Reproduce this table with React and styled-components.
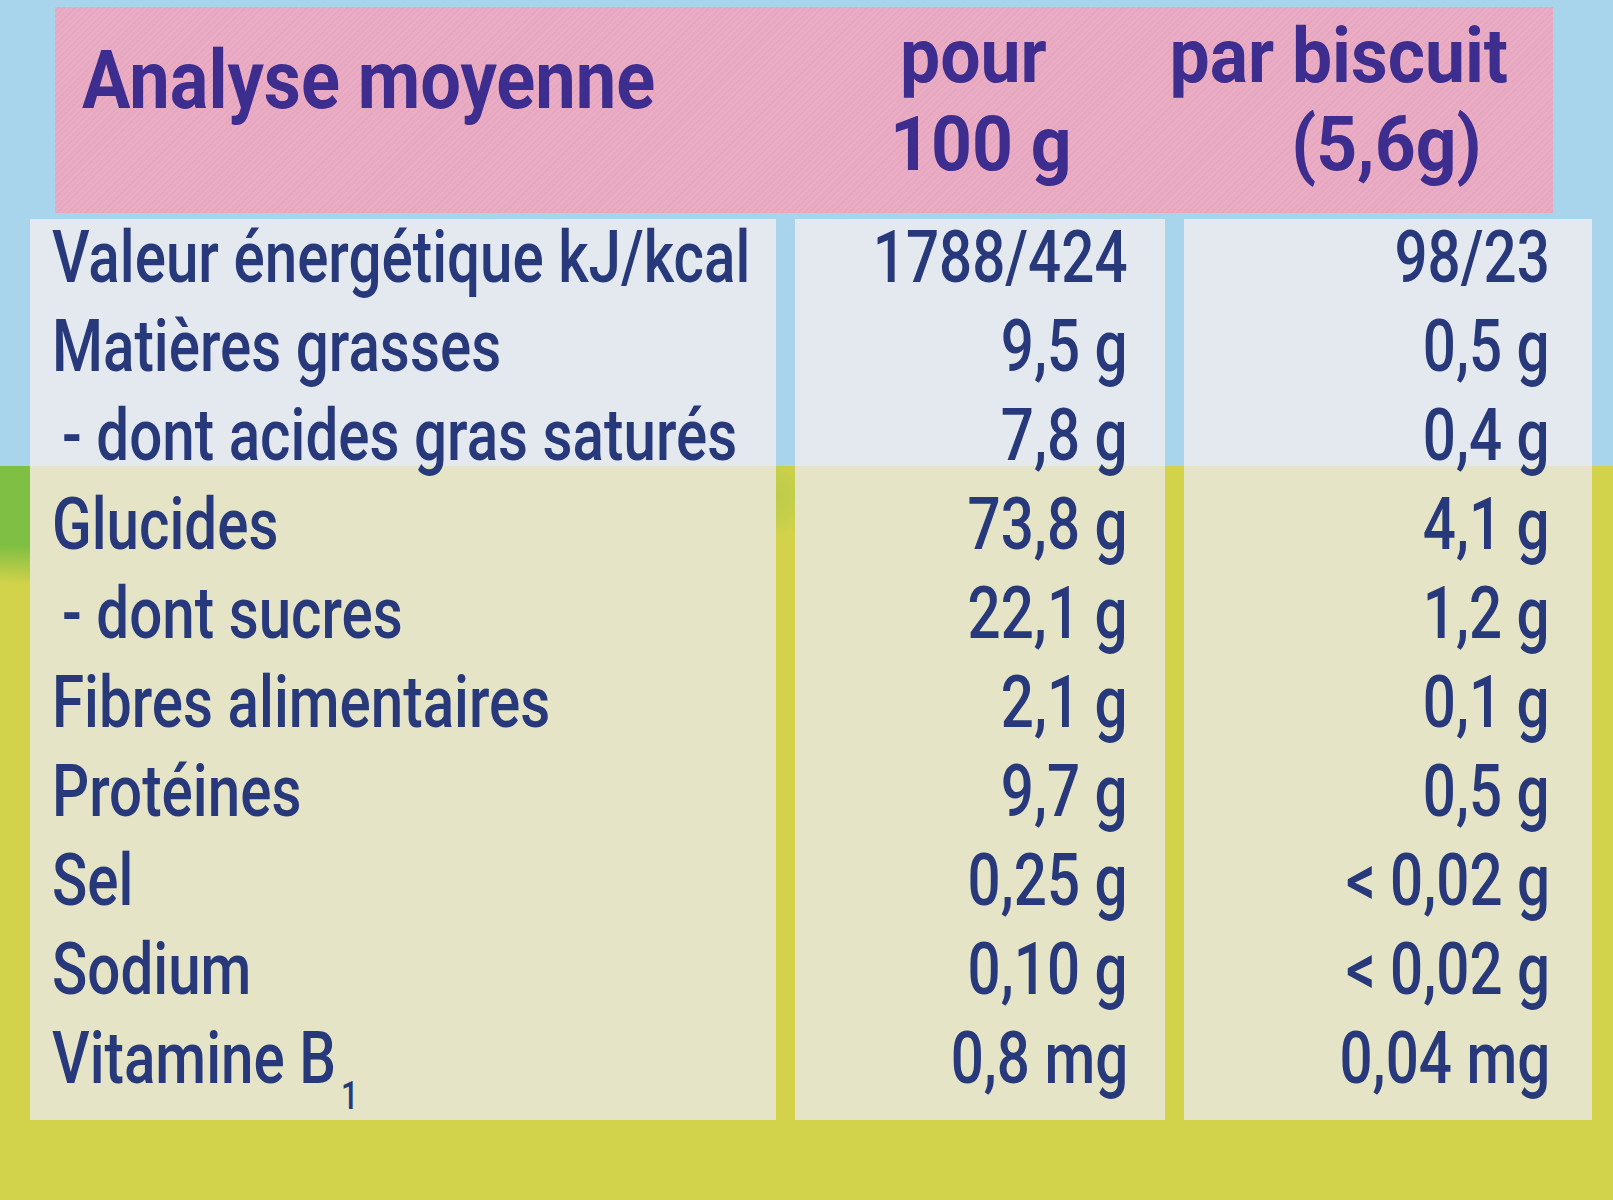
import React from 'react';
import styled, { createGlobalStyle } from 'styled-components';

const Global = createGlobalStyle`
  html, body { margin: 0; padding: 0; }
  body {
    width: 1613px;
    height: 1200px;
    overflow: hidden;
    font-family: Roboto, "Open Sans", "Noto Sans", sans-serif;
  }
`;

const HORIZON = 466;

const Page = styled.div`
  width: 1613px;
  height: 1200px;
  box-sizing: border-box;
  padding-top: 7px;
  display: flex;
  flex-direction: column;
  gap: 6px;
  background:
    radial-gradient(ellipse 700px 90px at 150px 30px, #7fbf43 0 58%, rgba(200, 206, 74, 0) 100%) 0 ${HORIZON}px / 100% 200px no-repeat,
    linear-gradient(to bottom, #a8d4ec 0 ${HORIZON}px, #d3d24b ${HORIZON}px 100%);
`;

const Header = styled.header`
  margin-left: 55px;
  width: 1498px;
  height: 206px;
  box-sizing: border-box;
  padding-top: 5px;
  display: flex;
  background:
    repeating-linear-gradient(135deg, rgba(255, 255, 255, 0.07) 0 2px, rgba(0, 0, 0, 0) 2px 4px),
    #e8a7c0;
  color: #3c2d8e;
  font-weight: 700;
`;

const HeadTitle = styled.div`
  flex: 0 0 835px;
  box-sizing: border-box;
  padding: 25px 0 0 27px;
  font-size: 82px;
  line-height: 86px;
`;

const HeadColumn = styled.div`
  flex: ${(p) => (p.$grow ? '1 1 auto' : '0 0 auto')};
  display: flex;
  flex-direction: column;
  align-items: ${(p) => (p.$align === 'right' ? 'flex-end' : 'flex-start')};
  padding-right: ${(p) => (p.$align === 'right' ? '45px' : '0')};
  font-size: 76px;
  line-height: 88px;
`;

const HeadLine = styled.span`
  display: inline-block;
  white-space: nowrap;
  transform: scaleX(${(p) => p.$scale || 0.94});
  transform-origin: ${(p) => (p.$align === 'right' ? 'right' : 'left')} center;
  margin-left: ${(p) => p.$shiftLeft || 0}px;
  margin-right: ${(p) => p.$shiftRight || 0}px;
`;

const Body = styled.main`
  margin-left: 30px;
  display: grid;
  grid-template-columns: 746px 370px 408px;
  column-gap: 19px;
  height: 901px;
`;

const Column = styled.section`
  box-sizing: border-box;
  padding: 3px ${(p) => (p.$align === 'right' ? p.$pad : 0)}px 8px ${(p) => (p.$align === 'right' ? 0 : p.$pad)}px;
  display: flex;
  flex-direction: column;
  align-items: ${(p) => (p.$align === 'right' ? 'flex-end' : 'flex-start')};
  background: linear-gradient(to bottom, #e3e9ef 0 ${HORIZON}px, #e5e4c7 ${HORIZON}px 100%) fixed;
  color: #28397b;
`;

const Cell = styled.div`
  height: 89px;
  flex: 0 0 89px;
  padding-left: ${(p) => (p.$indent ? 10 : 0)}px;
`;

const Text = styled.span`
  display: inline-block;
  white-space: nowrap;
  font-size: 72px;
  line-height: 72px;
  font-weight: 500;
  transform: scaleX(0.81);
  transform-origin: ${(p) => (p.$align === 'right' ? 'right' : 'left')} center;
`;

const Sub = styled.sub`
  font-size: 38px;
  line-height: 0;
  vertical-align: -26px;
  margin-left: 6px;
`;

const rows = [
  { label: 'Valeur énergétique kJ/kcal', per100: '1788/424', perUnit: '98/23' },
  { label: 'Matières grasses', per100: '9,5 g', perUnit: '0,5 g' },
  { label: '- dont acides gras saturés', per100: '7,8 g', perUnit: '0,4 g', indent: true },
  { label: 'Glucides', per100: '73,8 g', perUnit: '4,1 g' },
  { label: '- dont sucres', per100: '22,1 g', perUnit: '1,2 g', indent: true },
  { label: 'Fibres alimentaires', per100: '2,1 g', perUnit: '0,1 g' },
  { label: 'Protéines', per100: '9,7 g', perUnit: '0,5 g' },
  { label: 'Sel', per100: '0,25 g', perUnit: '< 0,02 g' },
  { label: 'Sodium', per100: '0,10 g', perUnit: '< 0,02 g' },
  { label: 'Vitamine B', sub: '1', per100: '0,8 mg', perUnit: '0,04 mg' },
];

export default function App() {
  return (
    <>
      <Global />
      <Page>
        <Header>
          <HeadTitle>
            <HeadLine $scale={0.88}>Analyse moyenne</HeadLine>
          </HeadTitle>
          <HeadColumn>
            <HeadLine $shiftLeft={10}>pour</HeadLine>
            <HeadLine>100 g</HeadLine>
          </HeadColumn>
          <HeadColumn $grow $align="right">
            <HeadLine $align="right">par biscuit</HeadLine>
            <HeadLine $align="right" $shiftRight={26}>(5,6g)</HeadLine>
          </HeadColumn>
        </Header>
        <Body>
          <Column $pad={22}>
            {rows.map((r) => (
              <Cell key={r.label} $indent={r.indent}>
                <Text>
                  {r.label}
                  {r.sub && <Sub>{r.sub}</Sub>}
                </Text>
              </Cell>
            ))}
          </Column>
          <Column $align="right" $pad={37}>
            {rows.map((r) => (
              <Cell key={r.label}>
                <Text $align="right">{r.per100}</Text>
              </Cell>
            ))}
          </Column>
          <Column $align="right" $pad={42}>
            {rows.map((r) => (
              <Cell key={r.label}>
                <Text $align="right">{r.perUnit}</Text>
              </Cell>
            ))}
          </Column>
        </Body>
      </Page>
    </>
  );
}
